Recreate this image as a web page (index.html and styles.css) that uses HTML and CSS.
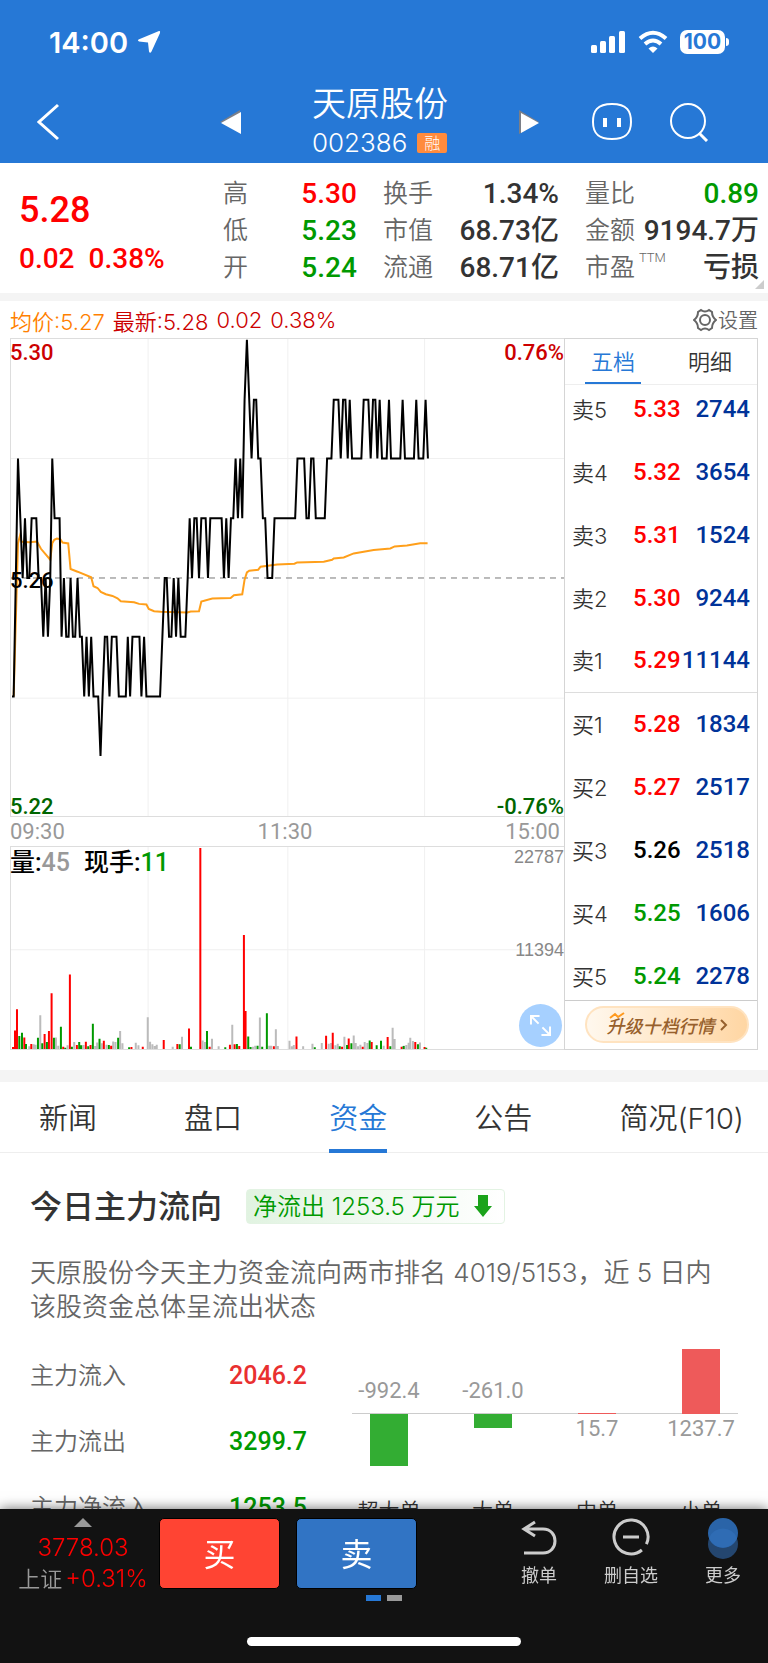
FILE: index.html
```html
<!DOCTYPE html>
<html lang="zh-CN">
<head>
  <meta charset="UTF-8">
  <meta name="viewport" content="width=device-width, initial-scale=1">
  <title>天原股份 002386</title>
  <link rel="stylesheet" href="styles.css">
</head>
<body>
  <header class="top">
    <div class="status">
      <span class="clock">14:00</span>
      <svg class="locate" width="24" height="24" viewBox="0 0 24 24"><path d="M22 1 L1.500 9.500 Q0 10.500 2 11.500 L11 12.500 L12 21.500 Q13 24 14.500 21.500 L23 3 Q23.500 .5 22 1Z" fill="#fff"/></svg>
      <svg class="signal" width="35" height="24" viewBox="0 0 35 24" fill="#fff">
        <rect x="0" y="15" width="6" height="8" rx="1.500"/><rect x="9" y="11" width="6" height="12" rx="1.500"/>
        <rect x="18" y="6" width="6" height="17" rx="1.500"/><rect x="28" y="1" width="6" height="22" rx="1.500"/>
      </svg>
      <svg class="wifi" width="30" height="24" viewBox="0 0 30 24" fill="none" stroke="#fff" stroke-width="4">
        <path d="M2 8.500 Q15 -3 28 8.500"/><path d="M7 14 Q15 7 23 14"/><path d="M15 23 L10.500 18.500 Q15 14.500 19.500 18.500Z" fill="#fff" stroke="none"/>
      </svg>
      <span class="battery">100</span>
    </div>
    <div class="nav">
      <div class="navSide">
        <button class="iconBtn" aria-label="返回"><svg width="24" height="38" viewBox="0 0 24 38" fill="none" stroke="#fff" stroke-width="3"><path d="M21 2 L2 19 L21 36"/></svg></button>
      </div>
      <div class="navMid">
        <button class="iconBtn" aria-label="上一只"><svg width="22" height="24" viewBox="0 0 22 24"><path d="M0 12 L20 0 V3 L4 13Z" fill="#7b7f88"/><path d="M1 13 L21 2 V24Z" fill="#fff"/></svg></button>
        <div class="stock">
          <h1>天原股份</h1>
          <div class="code">002386 <span class="rong">融</span></div>
        </div>
        <button class="iconBtn" aria-label="下一只"><svg width="22" height="24" viewBox="0 0 22 24"><path d="M1 0 L21 12 L1 24Z" fill="#7b7f88"/><path d="M3 3 L21 13 L3 23Z" fill="#fff"/></svg></button>
      </div>
      <div class="navSide right">
        <button class="iconBtn" aria-label="助手"><svg width="42" height="40" viewBox="0 0 42 40" fill="none" stroke="#fff" stroke-width="2"><path d="M21 2 C36 2 40 9 40 20 C40 31 35 37 21 37 C7 37 2 31 2 20 C2 9 6 2 21 2Z"/><path d="M14 16 V25 M28 16 V25" stroke-width="4"/></svg></button>
        <button class="iconBtn" aria-label="搜索"><svg width="40" height="40" viewBox="0 0 40 40" fill="none" stroke="#fff" stroke-width="2"><circle cx="19" cy="19" r="17"/><path d="M30 31 L38 39" stroke-width="3"/></svg></button>
      </div>
    </div>
  </header>

  <section class="quote">
    <div class="last">
      <div class="price">5.28</div>
      <div class="change"><span>0.02</span><span>0.38%</span></div>
    </div>
    <dl>
      <dt>高</dt><dd class="up">5.30</dd>
      <dt>低</dt><dd class="down">5.23</dd>
      <dt>开</dt><dd class="down">5.24</dd>
    </dl>
    <dl>
      <dt>换手</dt><dd>1.34%</dd>
      <dt>市值</dt><dd>68.73亿</dd>
      <dt>流通</dt><dd>68.71亿</dd>
    </dl>
    <dl>
      <dt>量比</dt><dd class="down">0.89</dd>
      <dt>金额</dt><dd>9194.7万</dd>
      <dt>市盈<sup>TTM</sup></dt><dd>亏损</dd>
    </dl>
  </section>

  <section class="trend">
    <div class="legend">
      <span class="avg">均价:5.27</span>
      <span>最新:5.28</span>
      <span>0.02</span>
      <span>0.38%</span>
      <button class="setting"><svg width="24" height="24" viewBox="0 0 24 24" fill="none" stroke="#666" stroke-width="2"><path d="M8 2 Q12 5 16 2 L19 4 Q19 9 23 12 Q19 15 19 20 L16 22 Q12 19 8 22 L5 20 Q5 15 1 12 Q5 9 5 4Z"/><circle cx="12" cy="12" r="5"/></svg>设置</button>
    </div>
    <div class="board">
      <div class="charts">
        <div class="priceChart">
          <svg viewBox="30 25 1662 1437" preserveAspectRatio="none">
            <path class="grid" d="M442 25 V1462 M862 25 V1462 M1273 25 V1462 M30 385 H1692 M30 1107 H1692"/>
            <path class="mid" d="M30 745 H1692"/>
            <polyline class="avgLine" points="38,1102 51,640 57,618 62,636 85,637 108,635 120,657 148,690 154,640 160,630 168,626 178,628 185,638 202,641 209,718 230,726 271,743 278,770 290,775 300,787 315,794 335,799 350,806 360,815 400,818 415,823 437,825 444,838 460,845 480,847 560,849 570,846 595,845 602,816 635,807 690,805 700,797 725,794 732,750 739,728 746,723 773,720 780,711 830,704 882,702 890,698 970,696 995,690 1000,686 1030,683 1060,671 1120,661 1170,656 1183,650 1220,647 1260,640 1282,640"/>
            <polyline class="priceLine" points="33,1102 38,1102 51,385 58,565 65,745 72,565 79,745 85,745 92,565 106,565 113,745 120,745 127,922 134,745 141,922 148,745 154,385 161,565 176,565 182,922 189,745 196,922 203,922 209,745 216,922 223,922 230,745 237,922 243,922 250,1102 257,922 264,1102 271,922 278,1102 292,1102 299,1281 305,1102 312,922 319,922 326,1102 333,922 347,922 354,1102 375,1102 381,922 388,1102 395,922 416,922 422,1102 430,922 437,1102 478,1102 485,922 492,745 498,745 505,922 512,922 519,745 526,922 533,745 540,922 554,922 561,745 567,565 574,745 581,565 588,565 595,745 602,565 615,565 622,745 629,565 663,565 670,745 677,565 684,745 691,565 698,565 705,385 712,565 719,385 725,565 732,208 739,27 746,208 753,385 760,208 767,208 773,385 780,385 787,565 794,565 801,745 815,745 822,565 884,565 891,385 911,385 918,565 925,565 932,385 939,385 946,565 973,565 980,385 993,385 1000,208 1014,208 1021,385 1028,208 1035,208 1042,385 1048,208 1055,385 1083,385 1090,208 1104,208 1111,385 1118,208 1125,208 1131,385 1138,208 1145,385 1159,385 1166,208 1172,385 1200,385 1207,208 1214,385 1241,385 1248,208 1255,385 1269,385 1276,208 1283,385"/>
          </svg>
          <span class="axis tl">5.30</span><span class="axis tr">0.76%</span>
          <span class="axis ml">5.26</span>
          <span class="axis bl">5.22</span><span class="axis br">-0.76%</span>
        </div>
        <div class="times"><span>09:30</span><span>11:30</span><span>15:00</span></div>
        <div class="volChart">
          <svg viewBox="30 110 1662 610" preserveAspectRatio="none">
            <path class="grid" d="M442 110 V720 M862 110 V720 M1273 110 V720 M30 420 H1692"/>
            <path class="bar gray" d="M85 720V712 M98 720V706 M104 720V707 M118 720V618 M165 720V685 M172 720V710 M200 720V709 M220 720V699 M248 720V708 M283 720V711 M289 720V700 M303 720V703 M317 720V707 M337 720V697 M344 720V699 M358 720V666 M365 720V703 M405 720V701 M413 720V709 M441 720V624 M448 720V698 M455 720V706 M462 720V711 M468 720V707 M516 720V713 M544 720V683 M606 720V694 M613 720V699 M634 720V689 M654 720V712 M695 720V647 M757 720V713 M764 720V710 M778 720V625 M806 720V710 M812 720V710 M826 720V660 M832 720V711 M867 720V695 M874 720V712 M880 720V708 M908 720V712 M936 720V704 M964 720V702 M985 720V704 M992 720V702 M1005 720V709 M1012 720V704 M1032 720V683 M1060 720V679 M1066 720V702 M1073 720V712 M1080 720V707 M1093 720V699 M1101 720V702 M1150 720V710 M1177 720V656 M1183 720V690 M1211 720V710 M1218 720V708 M1225 720V701 M1230 720V686 M1238 720V696 M1259 720V700"/>
            <path class="bar red" d="M36 720V714 M42 720V664 M48 720V600 M70 720V685 M91 720V705 M131 720V675 M144 720V666 M152 720V552 M187 720V713 M207 720V495 M228 720V708 M255 720V698 M269 720V708 M309 720V695 M331 720V710 M392 720V714 M426 720V713 M489 720V693 M530 720V705 M565 720V658 M599 720V113 M627 720V713 M688 720V707 M702 720V706 M716 720V711 M730 720V376 M735 720V605 M820 720V712 M888 720V702 M888 720V682 M977 720V680 M997 720V671 M1025 720V713 M1045 720V688 M1087 720V713 M1114 720V699 M1162 720V684 M1204 720V713 M1245 720V699 M1273 720V714"/>
            <path class="bar green" d="M55 720V681 M63 720V671 M75 720V705 M111 720V686 M124 720V703 M138 720V699 M159 720V686 M180 720V653 M193 720V716 M213 720V713 M235 720V699 M241 720V709 M262 720V712 M276 720V644 M296 720V689 M324 720V708 M352 720V686 M385 720V715 M537 720V706 M571 720V713 M619 720V666 M674 720V715 M709 720V705 M743 720V682 M750 720V714 M771 720V710 M785 720V713 M799 720V612 M943 720V715 M1018 720V712 M1040 720V708 M1053 720V703 M1108 720V694 M1129 720V709 M1142 720V695 M1170 720V712 M1210 720V711 M1253 720V706 M1278 720V716"/>
          </svg>
          <div class="volInfo">量:<span class="muted">45</span><span class="now">现手:</span><span class="down">11</span></div>
          <span class="volMax">22787</span><span class="volHalf">11394</span>
          <button class="expand" aria-label="全屏"><svg width="22" height="22" viewBox="0 0 22 22" fill="none" stroke="#fff" stroke-width="2"><path d="M1 10 V1 H10 M1 1 L9 9 M13 13 L21 21 M12 21 H21 V12"/></svg></button>
        </div>
      </div>

      <div class="orders">
        <div class="orderTabs">
          <button class="on">五档</button>
          <button>明细</button>
        </div>
        <table>
          <tbody>
            <tr><th>卖5</th><td class="up">5.33</td><td>2744</td></tr>
            <tr><th>卖4</th><td class="up">5.32</td><td>3654</td></tr>
            <tr><th>卖3</th><td class="up">5.31</td><td>1524</td></tr>
            <tr><th>卖2</th><td class="up">5.30</td><td>9244</td></tr>
            <tr><th>卖1</th><td class="up">5.29</td><td>11144</td></tr>
          </tbody>
          <tbody>
            <tr><th>买1</th><td class="up">5.28</td><td>1834</td></tr>
            <tr><th>买2</th><td class="up">5.27</td><td>2517</td></tr>
            <tr><th>买3</th><td class="flat">5.26</td><td>2518</td></tr>
            <tr><th>买4</th><td class="down">5.25</td><td>1606</td></tr>
            <tr><th>买5</th><td class="down">5.24</td><td>2278</td></tr>
          </tbody>
        </table>
        <div class="upgrade">
          <button><em>升级十档行情</em><svg width="8" height="14" viewBox="0 0 8 14" fill="none" stroke="#97602c" stroke-width="2"><path d="M1 2 L6 7 L1 12"/></svg><svg class="spark" width="16" height="8" viewBox="0 0 16 8" fill="none" stroke="#ff9a1f" stroke-width="2"><path d="M1 6 L6 2 L9 5 L15 1"/></svg></button>
        </div>
      </div>
    </div>
  </section>

  <nav class="tabs">
    <a href="#">新闻</a>
    <a href="#">盘口</a>
    <a href="#" class="on">资金</a>
    <a href="#">公告</a>
    <a href="#">简况(F10)</a>
  </nav>

  <section class="flow">
    <div class="flowHead">
      <h2>今日主力流向</h2>
      <div class="net">净流出 1253.5 万元
        <svg width="18" height="22" viewBox="0 0 18 22"><path d="M4 0 H14 V11 H18 L9 22 L0 11 H4Z" fill="#1ba31b"/></svg>
      </div>
    </div>
    <p>天原股份今天主力资金流向两市排名 4019/5153，近 5 日内该股资金总体呈流出状态</p>
    <div class="flowBody">
      <dl class="sums">
        <dt>主力流入</dt><dd class="in">2046.2</dd>
        <dt>主力流出</dt><dd class="down">3299.7</dd>
        <dt>主力净流入</dt><dd class="down">1253.5</dd>
      </dl>
      <div class="bars">
        <div class="col"><div class="above">-992.4</div><div class="below"><i class="g" style="height:52px"></i></div><div class="name">超大单</div></div>
        <div class="col"><div class="above">-261.0</div><div class="below"><i class="g" style="height:14px"></i></div><div class="name">大单</div></div>
        <div class="col"><div class="above"><i class="r" style="height:1px"></i></div><div class="below">15.7</div><div class="name">中单</div></div>
        <div class="col"><div class="above"><i class="r" style="height:65px"></i></div><div class="below">1237.7</div><div class="name">小单</div></div>
      </div>
    </div>
  </section>

  <footer class="dock">
    <div class="dockRow">
      <div class="index">
        <svg width="18" height="9" viewBox="0 0 18 9"><path d="M0 9 L9 0 L18 9Z" fill="#999"/></svg>
        <div>3778.03</div>
        <div><span>上证</span>+0.31%</div>
      </div>
      <button class="trade buy">买</button>
      <button class="trade sell">卖</button>
      <div class="tools">
        <button><svg width="38" height="38" viewBox="0 0 38 38" fill="none" stroke="#ccc" stroke-width="3"><path d="M15 4 L4 11 L15 18 M4 11 H23 C39 11 39 35 23 35 H4"/></svg>撤单</button>
        <button><svg width="38" height="38" viewBox="0 0 38 38" fill="none" stroke="#ccc" stroke-width="3"><path d="M34.400 26.200 A17 17 0 1 0 29.900 32"/><path d="M11 19 H27"/></svg>删自选</button>
        <button><svg width="38" height="42" viewBox="0 0 38 42"><circle cx="19" cy="26" r="15" fill="#24466f"/><circle cx="19" cy="15" r="15" fill="#2a64a8"/><path d="M5 20 A15 15 0 0 1 33 20 A15 15 0 0 1 5 20Z" fill="#2f6cb4"/></svg>更多</button>
      </div>
    </div>
    <div class="pager"><span class="on"></span><span></span></div>
    <div class="homeBar"></div>
  </footer>
</body>
</html>
```
FILE: styles.css
```css
* {
  box-sizing: border-box;
}
body {
  margin: 0;
  color: #333;
  background-color: #fff;
  font-family: Roboto, "Noto Sans CJK SC", sans-serif;
  font-size: 24px;
}
h1, h2, p, dl, dd {
  margin: 0;
}
svg {
  display: block;
}
button {
  margin: 0;
  padding: 0;
  border: 0;
  background: none;
  color: inherit;
  font: inherit;
}
.up { color: #f00; }
.down { color: #009900; }
.flat { color: #000; }
.muted { color: #999; }

/* header */
.top {
  height: 163px;
  padding-top: 24px;
  background-color: #2678d6;
  color: #fff;
  font-family: Inter, "Noto Sans CJK SC", sans-serif;
}
.status {
  display: flex;
  align-items: center;
  height: 36px;
  padding: 0 43px 0 49px;
}
.clock {
  font-size: 29px;
  font-weight: 600;
}
.locate {
  margin-left: 9px;
}
.signal {
  margin-left: auto;
}
.wifi {
  margin: 0 12px;
}
.battery {
  position: relative;
  width: 45px;
  height: 24px;
  border-radius: 7px;
  background-color: #fff;
  color: #2678d6;
  font-size: 21px;
  font-weight: 700;
  line-height: 24px;
  text-align: center;
}
.battery:after {
  content: "";
  position: absolute;
  right: -4px;
  top: 8px;
  width: 3px;
  height: 8px;
  border-radius: 0 3px 3px 0;
  background-color: #fff;
}
.nav {
  display: flex;
  align-items: center;
  height: 103px;
  padding: 20px 8px 0 0;
}
.navSide {
  flex: 1;
  display: flex;
  align-items: center;
  gap: 36px;
}
.navSide .iconBtn:first-child {
  margin-left: 37px;
}
.navSide.right {
  justify-content: flex-end;
}
.navSide.right .iconBtn:last-child {
  margin-right: 51px;
}
.navMid {
  display: flex;
  align-items: center;
  justify-content: space-between;
  width: 320px;
}
.stock {
  text-align: center;
}
.stock h1 {
  font-size: 34px;
  font-weight: 350;
  line-height: 42px;
}
.code {
  display: flex;
  align-items: center;
  gap: 10px;
  font-size: 26px;
  font-weight: 300;
  line-height: 36px;
}
.rong {
  width: 30px;
  border-radius: 2px;
  background-color: #ff8b3d;
  font-size: 16px;
  line-height: 20px;
}

/* quote numbers */
.quote {
  position: relative;
  display: grid;
  grid-template-columns: 177fr 133fr 175fr 173fr;
  gap: 26px;
  padding: 12px 9px 7px 19px;
  border-bottom: 8px solid #f4f4f4;
}
.quote:after {
  content: "";
  position: absolute;
  right: 4px;
  bottom: 4px;
  border-left: 9px solid transparent;
  border-bottom: 9px solid #ccc;
}
.last {
  color: #f00;
  font-weight: 500;
}
.price {
  padding-top: 12px;
  font-size: 36px;
  line-height: 46px;
}
.change {
  display: flex;
  gap: 14px;
  padding-top: 7px;
  font-size: 28px;
  line-height: 37px;
}
.quote dl {
  display: grid;
  grid-template-columns: auto 1fr;
  grid-auto-rows: 37px;
  line-height: 37px;
}
.quote dt {
  position: relative;
  color: #666;
  font-size: 25px;
  font-weight: 350;
}
.quote dd {
  font-size: 28px;
  font-weight: 500;
  text-align: right;
  white-space: nowrap;
}
.quote sup {
  position: absolute;
  left: 54px;
  top: 2px;
  font-size: 13px;
  line-height: 13px;
}

/* intraday chart */
.trend {
  padding: 0 10px 20px;
  border-bottom: 12px solid #f4f4f4;
}
.legend {
  display: flex;
  align-items: center;
  gap: 8px;
  height: 37px;
  color: #c00;
  font-family: Inter, "Noto Sans CJK SC", sans-serif;
  font-size: 22px;
  font-weight: 350;
}
.legend .avg {
  color: #ff8000;
}
.setting {
  display: flex;
  align-items: center;
  gap: 1px;
  margin-left: auto;
  color: #666;
  font-size: 20px;
}
.board {
  display: flex;
  height: 712px;
}
.charts {
  flex: 1;
}
.priceChart, .volChart {
  position: relative;
  border: solid #ddd;
  border-width: 1px 0 1px 1px;
}
.priceChart {
  height: 479px;
}
.volChart {
  height: 204px;
}
.charts svg {
  width: 100%;
  height: 100%;
}
.charts svg path, .charts svg polyline {
  fill: none;
  vector-effect: non-scaling-stroke;
}
.grid {
  stroke: #f0f0f0;
  stroke-width: 1px;
}
.mid {
  stroke: #777;
  stroke-width: 1px;
  stroke-dasharray: 6 5;
}
.avgLine {
  stroke: #ff9f1a;
  stroke-width: 2px;
}
.priceLine {
  stroke: #000;
  stroke-width: 2px;
}
.bar {
  stroke-width: 2px;
}
.bar.red { stroke: #f00; }
.bar.green { stroke: #009900; }
.bar.gray { stroke: #bbb; }
.axis {
  position: absolute;
  font-size: 22px;
  font-weight: 500;
  line-height: 26px;
}
.tl, .tr {
  top: 1px;
  color: #c00;
}
.bl, .br {
  bottom: -4px;
  color: #006600;
}
.tl, .ml, .bl { left: -1px; }
.tr, .br { right: 0; }
.ml {
  top: 50%;
  margin-top: -10px;
  color: #000;
}
.times {
  display: flex;
  justify-content: space-between;
  padding-right: 4px;
  color: #999;
  font-size: 22px;
  line-height: 30px;
  height: 29px;
}
.volInfo {
  position: absolute;
  left: -1px;
  top: 0;
  color: #000;
  font-size: 25px;
  font-weight: 500;
  line-height: 32px;
}
.now {
  margin-left: 14px;
}
.volMax, .volHalf {
  position: absolute;
  right: 0;
  top: 0;
  color: #888;
  font-family: "Liberation Sans", sans-serif;
  font-size: 18px;
  line-height: 20px;
}
.volHalf {
  top: 50%;
  margin-top: -8px;
}
.charts .expand {
  position: absolute;
  right: 2px;
  bottom: 2px;
  width: 43px;
  height: 43px;
  padding: 11px;
  border-radius: 50%;
  background-color: #a6d0ff;
}

/* order book */
.orders {
  width: 194px;
  border: 1px solid #d5d5d5;
}
.orderTabs {
  display: flex;
  justify-content: space-between;
  height: 46px;
  padding: 0 19px 0 20px;
  border-bottom: 1px solid #eee;
  font-size: 22px;
  font-weight: 350;
  line-height: 47px;
}
.orderTabs button {
  width: 56px;
}
.orderTabs .on {
  border-bottom: 2px solid #2678d6;
  color: #2678d6;
}
.orders table {
  width: 100%;
  margin: -8px 0 -7px;
  border-collapse: collapse;
}
.orders tr {
  height: 63px;
}
.orders tbody + tbody {
  border-top: 1px solid #ddd;
}
.orders th {
  width: 68px;
  padding: 0 0 2px 7px;
  font-family: Inter, "Noto Sans CJK SC", sans-serif;
  font-size: 22px;
  font-weight: 350;
  text-align: left;
}
.orders td {
  padding: 0;
  font-size: 24px;
  font-weight: 500;
}
.orders td:last-child {
  padding-right: 7px;
  color: #003399;
  text-align: right;
}
.upgrade {
  height: 49px;
  padding: 5px 8px 0 20px;
  border-top: 1px solid #ccc;
}
.upgrade button {
  position: relative;
  display: flex;
  align-items: center;
  justify-content: center;
  gap: 5px;
  width: 100%;
  height: 37px;
  border: 2px solid #ffe3c0;
  border-radius: 19px;
  background: linear-gradient(90deg, #fff8ee, #ffd6a3);
  color: #97602c;
  font-size: 18px;
  font-weight: 500;
}
.spark {
  position: absolute;
  left: 22px;
  top: 4px;
}

/* content tabs */
.tabs {
  display: flex;
  justify-content: space-between;
  height: 71px;
  padding: 0 24px 0 39px;
  border-bottom: 1px solid #eee;
  font-family: Inter, "Noto Sans CJK SC", sans-serif;
  font-size: 29px;
  font-weight: 350;
  line-height: 73px;
}
.tabs a {
  height: 71px;
  color: #333;
  text-decoration: none;
}
.tabs .on {
  border-bottom: 4px solid #2678d6;
  color: #2678d6;
}

/* capital flow */
.flow {
  padding: 30px 15px 0 30px;
}
.flowHead {
  display: flex;
  align-items: center;
  gap: 24px;
  height: 46px;
}
.flowHead h2 {
  padding-bottom: 4px;
  font-size: 32px;
  font-weight: 500;
}
.net {
  display: flex;
  align-items: center;
  gap: 14px;
  padding: 0 12px 0 6px;
  border: 1px solid #e3f3e3;
  border-radius: 4px;
  background: linear-gradient(90deg, #e1f3e1, #fff);
  color: #009900;
  font-family: Inter, "Noto Sans CJK SC", sans-serif;
  font-size: 24px;
  font-weight: 350;
  line-height: 33px;
}
.flow p {
  padding: 27px 29px 0 0;
  color: #666;
  font-family: Inter, "Noto Sans CJK SC", sans-serif;
  font-size: 26px;
  font-weight: 350;
  line-height: 34px;
}
.flowBody {
  display: flex;
  gap: 30px;
  padding-top: 19px;
}
.sums {
  display: grid;
  grid-template-columns: 1fr auto;
  grid-auto-rows: 66px;
  width: 277px;
  line-height: 66px;
}
.sums dt {
  color: #666;
  font-weight: 350;
}
.sums dd {
  font-size: 25px;
  font-weight: 500;
}
.sums .in {
  color: #e93030;
}
.bars {
  position: relative;
  flex: 1;
  display: flex;
}
.bars:before {
  content: "";
  position: absolute;
  left: 15px;
  right: 15px;
  top: 70px;
  border-top: 1px solid #ccc;
}
.col {
  flex: 1;
  color: #999;
  font-size: 22px;
  line-height: 30px;
}
.above, .below {
  display: flex;
  flex-direction: column;
  align-items: center;
  height: 71px;
}
.above {
  justify-content: flex-end;
  padding-bottom: 8px;
}
.above:has(i) {
  padding-bottom: 0;
}
.below {
  height: 82px;
}
.col i {
  position: relative;
  width: 38px;
}
.g { background-color: #33ad33; }
.r { background-color: #ee5a5a; }
.name {
  color: #333;
  font-size: 21px;
  font-weight: 350;
  text-align: center;
}

/* bottom bar */
.dock {
  position: fixed;
  left: 0;
  right: 0;
  bottom: 0;
  height: 154px;
  padding: 9px 0;
  background-color: #121212;
  box-shadow: 0 0 12px rgba(0, 0, 0, .6);
  color: #ccc;
}
.dockRow {
  display: flex;
  height: 71px;
}
.index {
  display: flex;
  flex-direction: column;
  align-items: center;
  width: 159px;
  padding-left: 7px;
  color: #f00;
  font-family: Inter, "Noto Sans CJK SC", sans-serif;
  font-size: 24px;
  font-weight: 350;
  line-height: 31px;
}
.index svg {
  flex-shrink: 0;
  margin-bottom: 5px;
}
.index span {
  margin-right: 3px;
  color: #999;
  font-size: 22px;
}
.trade {
  width: 121px;
  height: 71px;
  margin-right: 16px;
  padding-bottom: 4px;
  border: 1px solid #000;
  border-radius: 5px;
  color: #fff;
  font-size: 32px;
}
.buy { background-color: #ff4433; }
.sell { background-color: #3174c4; }
.tools {
  flex: 1;
  display: flex;
  justify-content: flex-end;
  gap: 46px;
  padding-right: 26px;
}
.tools button {
  display: flex;
  flex-direction: column;
  align-items: center;
  justify-content: space-between;
  font-size: 18px;
  line-height: 26px;
}
.pager {
  display: flex;
  justify-content: center;
  gap: 6px;
  padding-top: 6px;
}
.pager span {
  width: 15px;
  height: 6px;
  background-color: #999;
}
.pager .on {
  background-color: #2678d6;
}
.homeBar {
  width: 274px;
  height: 9px;
  margin: 36px auto 0;
  border-radius: 5px;
  background-color: #fff;
}
```
